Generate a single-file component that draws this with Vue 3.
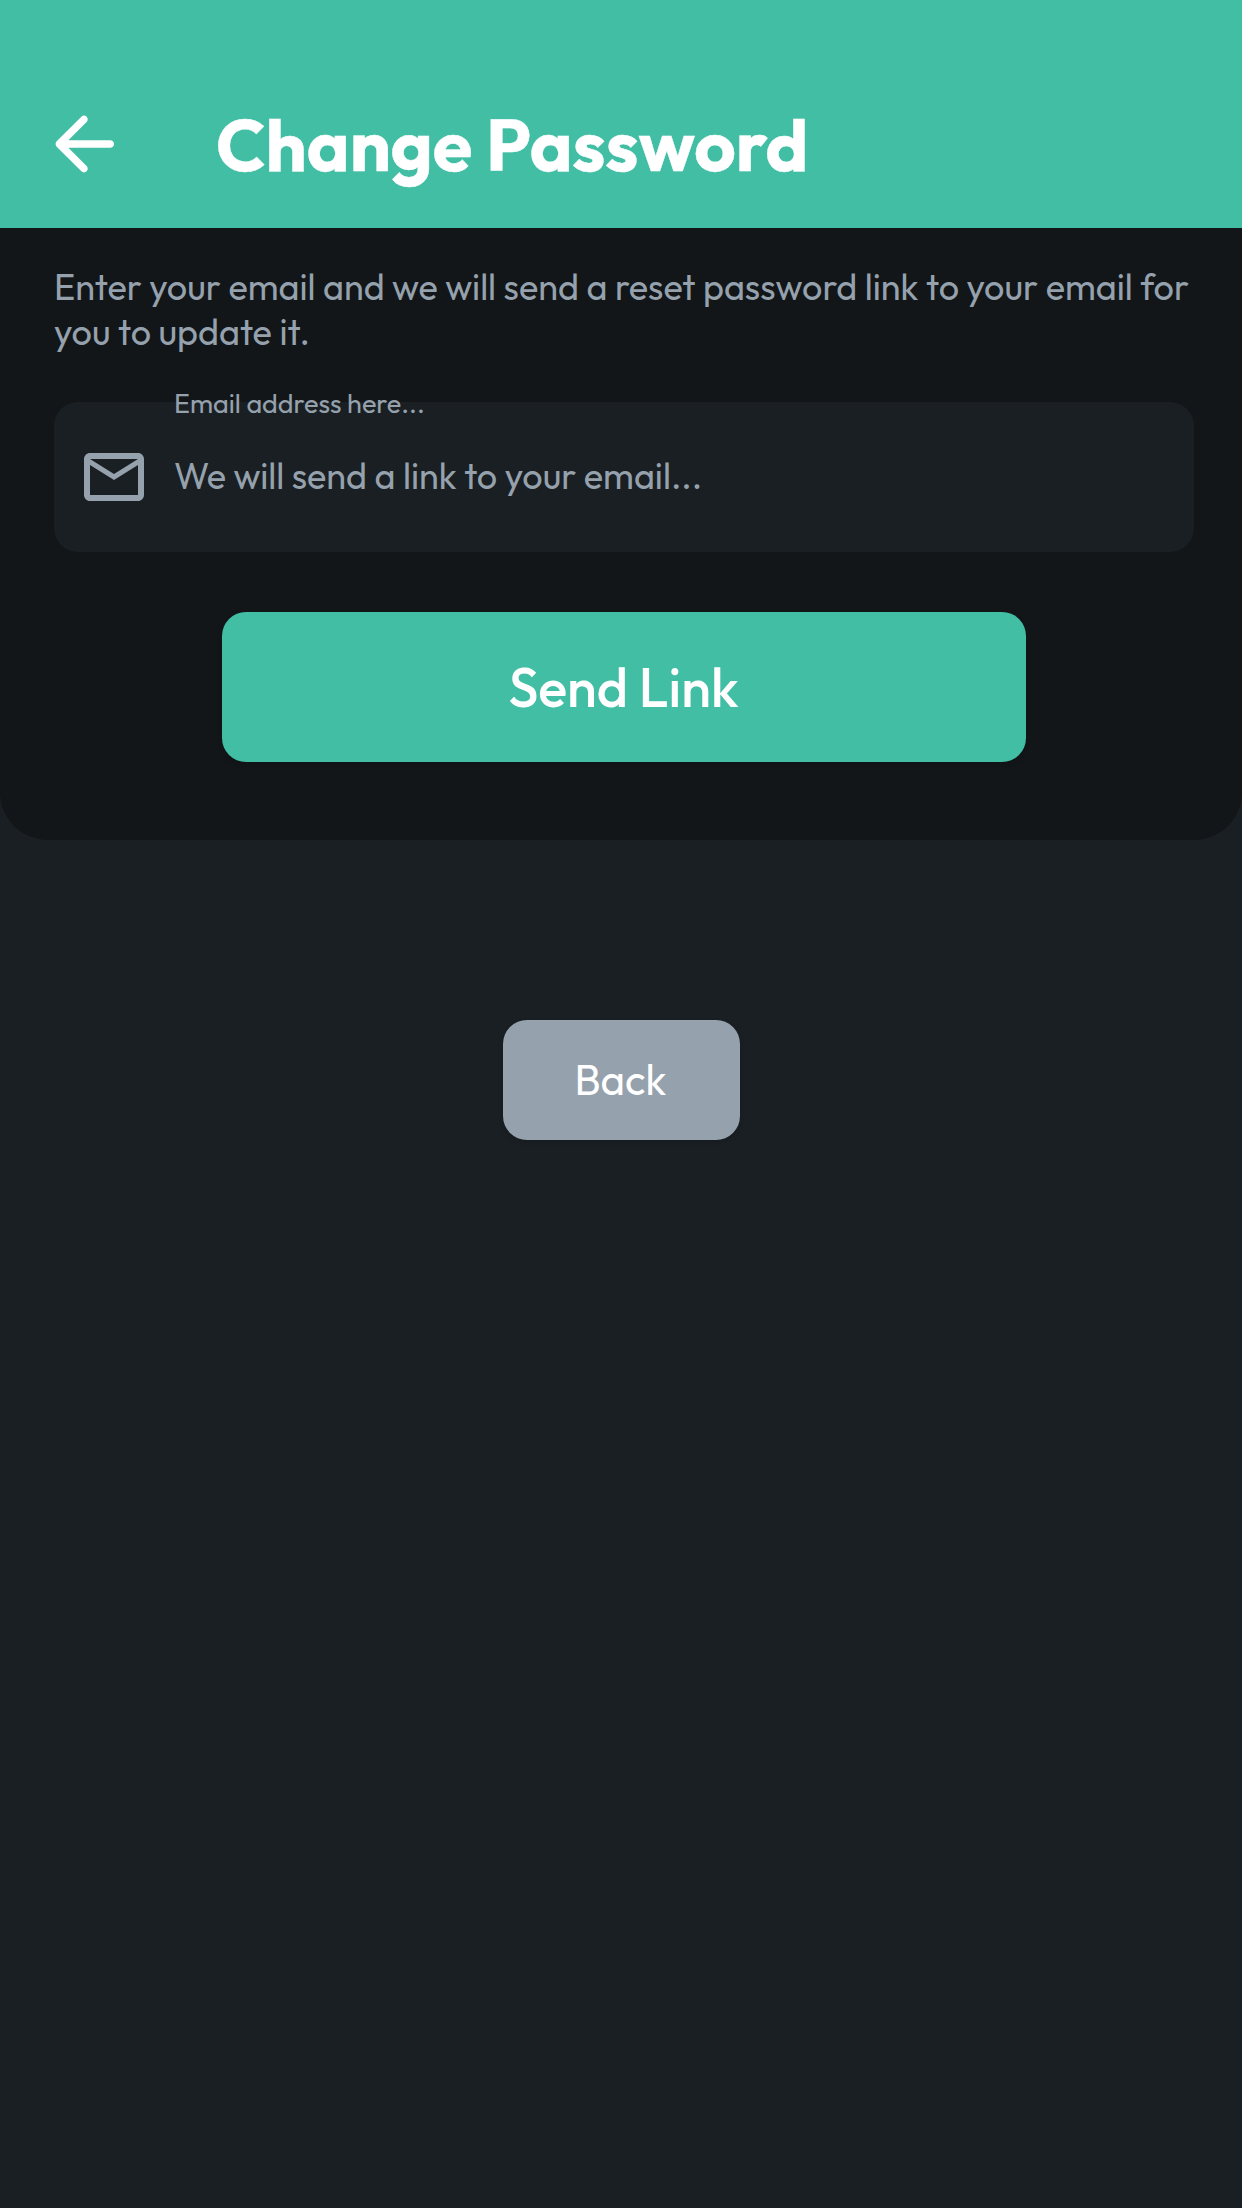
<script setup>
import { ref } from 'vue'

const email = ref('')
</script>

<template>
  <div class="screen">
    <header class="app-bar">
      <button class="icon-button" type="button" aria-label="Go back">
        <svg width="90" height="90" viewBox="0 0 24 24" fill="currentColor">
          <path d="M19 11H7.83l4.88-4.88c.39-.39.39-1.03 0-1.42-.39-.39-1.02-.39-1.41 0l-6.59 6.59c-.39.39-.39 1.02 0 1.41l6.59 6.59c.39.39 1.02.39 1.41 0 .39-.39.39-1.02 0-1.41L7.83 13H19c.55 0 1-.45 1-1s-.45-1-1-1z" />
        </svg>
      </button>
      <h1 class="title">Change Password</h1>
    </header>

    <main class="card">
      <p class="hint">Enter your email and we will send a reset password link to your email for you to update it.</p>

      <div class="field">
        <label class="field-label" for="email">Email address here...</label>
        <svg class="field-icon" width="72" height="72" viewBox="0 0 24 24" fill="currentColor">
          <path d="M22 6c0-1.1-.9-2-2-2H4c-1.1 0-2 .9-2 2v12c0 1.1.9 2 2 2h16c1.1 0 2-.9 2-2V6zm-2 0l-8 5-8-5h16zm0 12H4V8l8 5 8-5v10z" />
        </svg>
        <input id="email" v-model="email" class="field-input" type="email" placeholder="We will send a link to your email..." />
      </div>

      <button class="button primary" type="button">Send Link</button>
    </main>

    <button class="button secondary" type="button">Back</button>
  </div>
</template>

<style>
body {
  background: #1a1f23;
}
</style>

<style scoped>
.screen {
  display: flex;
  flex-direction: column;
  align-items: center;
  min-height: 2208px;
  background: #1a1f23;
  font-family: Outfit, Lato, sans-serif;
}

.app-bar {
  box-sizing: border-box;
  display: flex;
  align-items: center;
  gap: 87px;
  width: 100%;
  height: 228px;
  padding: 60px 39px 0;
  background: #42bea5;
  color: #fff;
}

.icon-button {
  display: flex;
  padding: 0;
  border: 0;
  background: none;
  color: inherit;
}

.title {
  margin: 0;
  font-size: 72px;
  font-weight: 700;
  line-height: 91px;
  -webkit-text-stroke: 0.4px currentColor;
}

.card {
  box-sizing: border-box;
  display: flex;
  flex-direction: column;
  width: 100%;
  height: 612px;
  padding: 36px 48px 0 54px;
  border-radius: 0 0 48px 48px;
  background: #121619;
}

.hint {
  margin: 0;
  color: #95a1ac;
  font-size: 36px;
  line-height: 45px;
}

.field {
  position: relative;
  display: flex;
  align-items: center;
  gap: 24px;
  height: 150px;
  margin-top: 48px;
  padding: 0 24px;
  box-sizing: border-box;
  border-radius: 24px;
  background: #1a1f23;
  color: #95a1ac;
}

.field-label {
  position: absolute;
  top: -16px;
  left: 120px;
  font-size: 27px;
  line-height: 34px;
}

.field-icon {
  flex: none;
}

.field-input {
  flex: 1;
  min-width: 0;
  height: 45px;
  margin: 0 0 3px;
  padding: 0;
  border: 0;
  outline: 0;
  background: none;
  color: inherit;
  font: 400 36px / 45px Outfit, Lato, sans-serif;
}

.field-input::placeholder {
  color: #95a1ac;
  opacity: 1;
}

.button {
  box-sizing: border-box;
  padding: 0;
  border: 0;
  border-radius: 24px;
  color: #fff;
  font-family: inherit;
}

.primary {
  align-self: center;
  width: 804px;
  height: 150px;
  margin-top: 60px;
  padding-right: 1px;
  background: #42bea5;
  box-shadow: 0 2px 5px rgba(0, 0, 0, 0.12);
  font-size: 54px;
  font-weight: 500;
  line-height: 68px;
}

.secondary {
  width: 237px;
  height: 120px;
  margin-top: 180px;
  padding: 0 1px 1px 0;
  background: #95a1ac;
  box-shadow: 0 2px 5px rgba(0, 0, 0, 0.14);
  font-size: 42px;
  font-weight: 400;
  line-height: 53px;
}
</style>
